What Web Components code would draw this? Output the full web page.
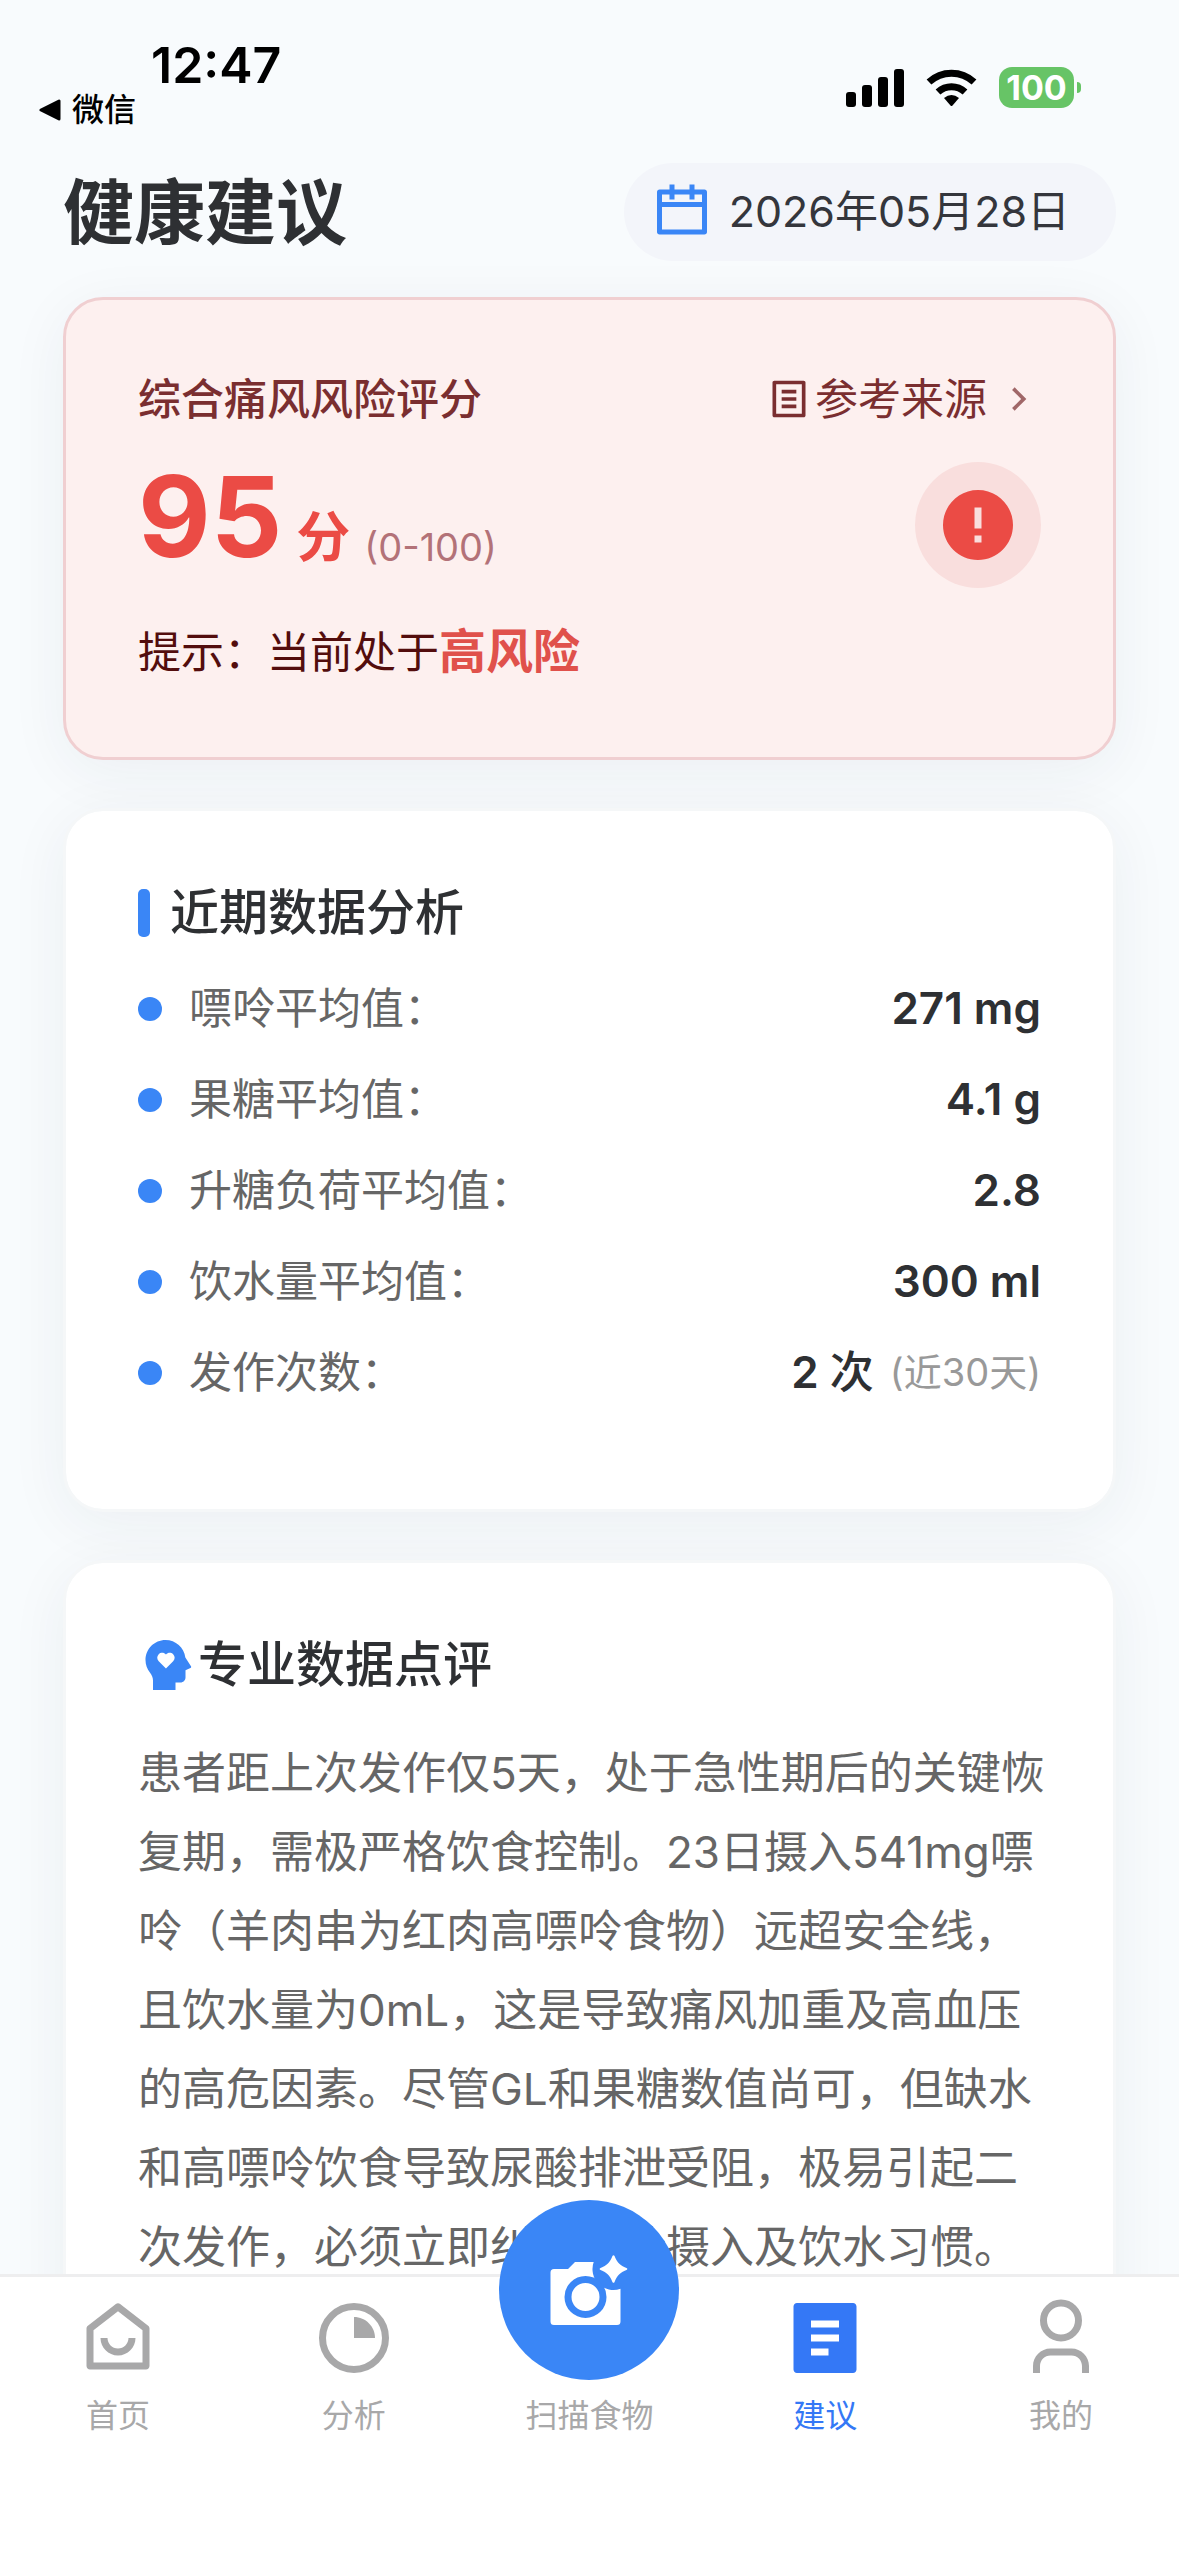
<!DOCTYPE html>
<html lang="zh-CN">
<head>
<meta charset="UTF-8">
<meta name="viewport" content="width=device-width, initial-scale=1">
<title>健康建议</title>
<style>
  body {
    margin: 0;
    background: #f8fbfd;
    color: #2e3033;
    font-family: Inter, "Noto Sans CJK SC", sans-serif;
    font-size: 43px;
  }
</style>
</head>
<body>
<health-app>
  <status-bar slot="top" time="12:47" back="微信" battery="100"></status-bar>
  <page-header slot="top" heading="健康建议" date="2026年05月28日"></page-header>

  <risk-card score="95" range="(0-100)" level="高风险"></risk-card>

  <info-card>
    <card-title marker="bar">近期数据分析</card-title>
    <metric-list>
      <metric-row label="嘌呤平均值：">271 mg</metric-row>
      <metric-row label="果糖平均值：">4.1 g</metric-row>
      <metric-row label="升糖负荷平均值：">2.8</metric-row>
      <metric-row label="饮水量平均值：">300 ml</metric-row>
      <metric-row label="发作次数：" note="(近30天)">2 <span>次</span></metric-row>
    </metric-list>
  </info-card>

  <info-card>
    <card-title marker="mind">专业数据点评</card-title>
    <review-text>患者距上次发作仅5天，处于急性期后的关键恢复期，需极严格饮食控制。23日摄入541mg嘌呤（羊肉串为红肉高嘌呤食物）远超安全线，且饮水量为0mL，这是导致痛风加重及高血压的高危因素。尽管GL和果糖数值尚可，但缺水和高嘌呤饮食导致尿酸排泄受阻，极易引起二次发作，必须立即纠正嘌呤摄入及饮水习惯。</review-text>
  </info-card>

  <tab-bar slot="bottom">
    <tab-item icon="home">首页</tab-item>
    <tab-item icon="pie">分析</tab-item>
    <tab-item icon="camera" raised>扫描食物</tab-item>
    <tab-item icon="article" active>建议</tab-item>
    <tab-item icon="user">我的</tab-item>
  </tab-bar>
</health-app>

<script>
  // shared helper: fills the open shadow root of an element from markup
  function render(el, html) {
    const template = document.createElement("template");
    template.innerHTML = html;
    el.attachShadow({ mode: "open" }).appendChild(template.content.cloneNode(true));
  }

  const ICONS = {
    calendar: `<path d="M9 1V3H15V1H17V3H21C21.55 3 22 3.45 22 4V20C22 20.55 21.55 21 21 21H3C2.45 21 2 20.55 2 20V4C2 3.45 2.45 3 3 3H7V1H9ZM20 10H4V19H20V10ZM15 5H9V7H7V5H4V8H20V5H17V7H15V5Z"/>`,
    source: `<path d="M20 22H4C3.45 22 3 21.55 3 21V3C3 2.45 3.45 2 4 2H20C20.55 2 21 2.45 21 3V21C21 21.55 20.55 22 20 22ZM19 20V4H5V20H19ZM8 7H16V9H8V7ZM8 11H16V13H8V11ZM8 15H16V17H8V15Z"/>`,
    chevron: `<path d="M13.17 12L8.22 7.05L9.64 5.64L16 12L9.64 18.36L8.22 16.95Z"/>`,
    warning: `<path d="M12 22C6.48 22 2 17.52 2 12C2 6.48 6.48 2 12 2C17.52 2 22 6.48 22 12C22 17.52 17.52 22 12 22ZM11 15V17H13V15H11ZM11 7V13H13V7H11Z"/>`,
    mind: `<path fill-rule="evenodd" d="M11 2C15.07 2 18.41 5.04 18.94 8.96L21.19 12.5C21.34 12.73 21.31 13.09 20.97 13.23L19 14.07V17C19 18.1 18.1 19 17 19H15V22H6V18.31C6 17.13 5.56 16 4.76 15C3.66 13.63 3 11.9 3 10C3 5.58 6.58 2 11 2ZM11.18 7.82C10.39 6.96 9.09 6.92 8.29 7.73C7.5 8.54 7.5 9.72 8.29 10.52L11.18 13.4L14.06 10.52C14.86 9.72 14.86 8.54 14.06 7.73C13.26 6.92 11.96 6.96 11.18 7.82Z"/>`,
    home: `<path d="M19 19V9.8L12 4.35L5 9.8V19H19ZM21 20C21 20.55 20.55 21 20 21H4C3.45 21 3 20.55 3 20V9.31C3 9 3.14 8.71 3.39 8.52L11.39 2.3C11.75 2.02 12.25 2.02 12.61 2.3L20.61 8.52C20.86 8.71 21 9 21 9.31V20ZM7 12H9C9 13.66 10.34 15 12 15C13.66 15 15 13.66 15 12H17C17 14.76 14.76 17 12 17C9.24 17 7 14.76 7 12Z"/>`,
    pie: `<circle cx="12" cy="12" r="9" fill="none" stroke="currentColor" stroke-width="2"/><path d="M12 6C15.31 6 18 8.69 18 12H12V6Z"/>`,
    article: `<path d="M20 22H4C3.45 22 3 21.55 3 21V3C3 2.45 3.45 2 4 2H20C20.55 2 21 2.45 21 3V21C21 21.55 20.55 22 20 22ZM8 7V9H16V7H8ZM8 11V13H16V11H8ZM8 15V17H13V15H8Z"/>`,
    user: `<circle cx="12" cy="7" r="5" fill="none" stroke="currentColor" stroke-width="2"/><path d="M20 22H18V20C18 18.34 16.66 17 15 17H9C7.34 17 6 18.34 6 20V22H4V20C4 17.24 6.24 15 9 15H15C17.76 15 20 17.24 20 20V22Z"/>`,
    camera: `<path d="M3 5H7L9 3H14.34A6 6 0 0 0 22 10.66V20A1 1 0 0 1 21 21H3A1 1 0 0 1 2 20V6A1 1 0 0 1 3 5Z"/><circle cx="12" cy="13" r="5" fill="none" stroke="#3a86f6" stroke-width="2"/><path d="M20.3 1.3C21 3.1 21.9 4 23.7 4.7C24.05 4.85 24.05 5.15 23.7 5.3C21.9 6 21 6.9 20.3 8.7C20.15 9.05 19.85 9.05 19.7 8.7C19 6.9 18.1 6 16.3 5.3C15.95 5.15 15.95 4.85 16.3 4.7C18.1 4 19 3.1 19.7 1.3C19.85.95 20.15.95 20.3 1.3Z"/>`
  };

  // artwork that is not centred on the 24 unit grid
  const VIEW_BOXES = { camera: "1 -1 24 24" };

  class AppIcon extends HTMLElement {
    connectedCallback() {
      const name = this.getAttribute("name");
      render(this, `
        <style>
          :host { display: block; flex: none; width: var(--icon-size, 84px); height: var(--icon-size, 84px); }
          svg { display: block; width: 100%; height: 100%; fill: currentColor; }
        </style>
        <svg viewBox="${VIEW_BOXES[name] || "0 0 24 24"}" aria-hidden="true">${ICONS[name]}</svg>
      `);
    }
  }

  class HealthApp extends HTMLElement {
    connectedCallback() {
      render(this, `
        <style>
          :host { display: flex; flex-direction: column; height: 100vh; }
          main {
            flex: 1;
            min-height: 0;
            overflow-y: auto;
            scrollbar-width: none;
          }
          .cards {
            display: flex;
            flex-direction: column;
            gap: 48px;
            padding: 36px 63px 120px;
          }
        </style>
        <main>
          <slot name="top"></slot>
          <div class="cards"><slot></slot></div>
        </main>
        <slot name="bottom"></slot>
      `);
    }
  }

  class StatusBar extends HTMLElement {
    connectedCallback() {
      render(this, `
        <style>
          :host {
            display: flex;
            justify-content: space-between;
            box-sizing: border-box;
            height: 163px;
            padding: 40px 98px 0 39px;
            color: #000;
          }
          .time {
            padding-left: 112px;
            font-size: 50px;
            font-weight: 600;
            line-height: 50px;
          }
          button {
            display: flex;
            align-items: center;
            gap: 11px;
            padding: 0;
            border: 0;
            background: none;
            color: inherit;
            font: 500 32px/40px Inter, "Noto Sans CJK SC", sans-serif;
          }
          .signals {
            display: flex;
            align-items: center;
            gap: 22px;
            height: 95px;
          }
          svg { display: block; }
          .battery { display: flex; align-items: center; gap: 3px; }
          .level {
            width: 75px;
            border-radius: 13px;
            background: #67c466;
            color: #fff;
            font-size: 34px;
            font-weight: 700;
            line-height: 41px;
            text-align: center;
          }
          .nub { width: 4px; height: 11px; border-radius: 0 4px 4px 0; background: #67c466; }
        </style>
        <div>
          <div class="time">${this.getAttribute("time")}</div>
          <button type="button">
            <svg width="22" height="22" viewBox="0 0 22 22"><path d="M2 11L20 2V20Z" stroke="#000" stroke-width="3" stroke-linejoin="round"/></svg>
            ${this.getAttribute("back")}
          </button>
        </div>
        <div class="signals">
          <svg width="58" height="38" viewBox="0 0 58 38">
            <rect x="0" y="23" width="10" height="15" rx="3"/>
            <rect x="16" y="16" width="10" height="22" rx="3"/>
            <rect x="32" y="8" width="10" height="30" rx="3"/>
            <rect x="48" y="0" width="10" height="38" rx="3"/>
          </svg>
          <svg width="51" height="38" viewBox="0 0 51 38">
            <path d="M3 13A33 33 0 0 1 48 13" fill="none" stroke="#000" stroke-width="7"/>
            <path d="M12 23A20 20 0 0 1 39 23" fill="none" stroke="#000" stroke-width="7"/>
            <path d="M18 29Q25.500 23 33 29L26.500 36.500Q25.500 37.500 24.500 36.500Z"/>
          </svg>
          <div class="battery">
            <div class="level">${this.getAttribute("battery")}</div>
            <div class="nub"></div>
          </div>
        </div>
      `);
    }
  }

  class PageHeader extends HTMLElement {
    connectedCallback() {
      render(this, `
        <style>
          :host {
            display: flex;
            align-items: center;
            justify-content: space-between;
            padding: 0 63px;
          }
          h1 { margin: 0; font-size: 71px; font-weight: 700; line-height: 98px; }
          button {
            --icon-size: 60px;
            display: flex;
            align-items: center;
            gap: 17px;
            height: 98px;
            padding: 0 46px 0 28px;
            border: 0;
            border-radius: 49px;
            background: #f3f5fa;
            color: #34363c;
            font: 43px Inter, "Noto Sans CJK SC", sans-serif;
          }
          app-icon { color: #3a86f6; }
          .date { padding-bottom: 8px; }
        </style>
        <h1>${this.getAttribute("heading")}</h1>
        <button type="button">
          <app-icon name="calendar"></app-icon>
          <span class="date">${this.getAttribute("date")}</span>
        </button>
      `);
    }
  }

  class RiskCard extends HTMLElement {
    connectedCallback() {
      render(this, `
        <style>
          :host {
            display: flex;
            flex-direction: column;
            gap: 30px;
            padding: 66px 72px 72px;
            border: 3px solid #f0cfd1;
            border-radius: 40px;
            background: #fdf0ef;
            box-shadow: 0 12px 60px rgba(40, 50, 60, 0.06);
            color: #530d0d;
            line-height: 66px;
          }
          .head, .body, a { display: flex; align-items: center; }
          .head, .body { justify-content: space-between; }
          h2 { margin: 0; font-size: 43px; font-weight: 500; color: #7a2e30; }
          a { --icon-size: 44px; gap: 4px; color: #7a2e30; text-decoration: none; }
          .chevron { margin-left: 6px; opacity: 0.7; }
          .score {
            display: flex;
            align-items: baseline;
            gap: 14px;
            padding-bottom: 18px;
            color: #eb4b45;
            font-weight: 700;
          }
          .number { font-size: 112px; line-height: 100px; }
          .unit { font-size: 54px; line-height: 54px; }
          .range {
            align-self: flex-end;
            color: #b37278;
            font-size: 38px;
            font-weight: 400;
            line-height: 38px;
          }
          .badge {
            display: grid;
            place-items: center;
            width: 126px;
            height: 126px;
            border-radius: 50%;
            background: #f9dedd;
            color: #eb4b45;
          }
          p { margin: 0; }
          strong { color: #e0514b; font-size: 47px; font-weight: 700; }
        </style>
        <div class="head">
          <h2>综合痛风风险评分</h2>
          <a href="#source">
            <app-icon name="source"></app-icon>
            <span>参考来源</span>
            <app-icon class="chevron" name="chevron"></app-icon>
          </a>
        </div>
        <div class="body">
          <div class="score">
            <span class="number">${this.getAttribute("score")}</span>
            <span class="unit">分</span>
            <span class="range">${this.getAttribute("range")}</span>
          </div>
          <div class="badge"><app-icon name="warning"></app-icon></div>
        </div>
        <p>提示：当前处于<strong>${this.getAttribute("level")}</strong></p>
      `);
    }
  }

  class InfoCard extends HTMLElement {
    connectedCallback() {
      render(this, `
        <style>
          :host {
            display: block;
            padding: 66px 72px 72px;
            border: 3px solid #f5f7f8;
            border-radius: 40px;
            background: #fff;
            background-clip: padding-box;
            box-shadow: 0 12px 60px rgba(40, 50, 60, 0.06);
          }
        </style>
        <slot></slot>
      `);
    }
  }

  class CardTitle extends HTMLElement {
    connectedCallback() {
      const marker = this.getAttribute("marker") === "bar"
        ? `<span class="bar"></span>`
        : `<app-icon name="${this.getAttribute("marker")}"></app-icon>`;

      render(this, `
        <style>
          :host { --icon-size: 60px; display: flex; align-items: center; }
          .bar {
            width: 12px;
            height: 48px;
            margin-right: 20px;
            border-radius: 5px;
            background: #3a86f6;
          }
          app-icon { color: #3a86f6; }
          h2 { margin: 0; font-size: 49px; font-weight: 500; line-height: 72px; }
        </style>
        ${marker}
        <h2><slot></slot></h2>
      `);
    }
  }

  class MetricList extends HTMLElement {
    connectedCallback() {
      this.setAttribute("role", "list");
      render(this, `
        <style>
          :host { display: block; padding: 14px 0 19px; }
        </style>
        <slot></slot>
      `);
    }
  }

  class MetricRow extends HTMLElement {
    connectedCallback() {
      const note = this.getAttribute("note");
      this.setAttribute("role", "listitem");
      render(this, `
        <style>
          :host { display: flex; align-items: center; line-height: 91px; }
          .dot {
            width: 24px;
            height: 24px;
            margin-right: 27px;
            border-radius: 50%;
            background: #3a86f6;
          }
          .label { flex: 1; color: #666; }
          .value { font-size: 44px; font-weight: 600; }
          .note { margin-left: 16px; color: #999; font-size: 38px; }
          ::slotted(span) { font-weight: 500; }
        </style>
        <span class="dot"></span>
        <span class="label">${this.getAttribute("label")}</span>
        <span class="value"><slot></slot></span>
        ${note ? `<span class="note">${note}</span>` : ""}
      `);
    }
  }

  class ReviewText extends HTMLElement {
    connectedCallback() {
      render(this, `
        <style>
          :host { display: block; margin-right: -8px; padding-top: 33px; color: #666; }
          p { margin: 0; font-size: 44px; line-height: 79px; }
        </style>
        <p><slot></slot></p>
      `);
    }
  }

  class TabBar extends HTMLElement {
    connectedCallback() {
      render(this, `
        <style>
          :host { display: block; border-top: 3px solid #eeeeef; background: #fff; }
          nav {
            display: grid;
            grid-template-columns: repeat(5, 1fr);
            padding: 19px 0 120px;
          }
        </style>
        <nav><slot></slot></nav>
      `);
    }
  }

  class TabItem extends HTMLElement {
    connectedCallback() {
      render(this, `
        <style>
          :host { display: block; color: #a8a8a9; }
          :host([active]) { color: #3478f6; }
          a {
            display: flex;
            flex-direction: column;
            align-items: center;
            gap: 16px;
            color: inherit;
            font-size: 32px;
            line-height: 40px;
            text-decoration: none;
          }
          /* the scan button rises above the edge of the bar */
          :host([raised]) .icon {
            display: grid;
            place-items: center;
            width: 180px;
            height: 180px;
            margin-top: -96px;
            border-radius: 50%;
            background: #3a86f6;
            color: #fff;
          }
        </style>
        <a href="#${this.getAttribute("icon")}">
          <span class="icon"><app-icon name="${this.getAttribute("icon")}"></app-icon></span>
          <slot></slot>
        </a>
      `);
    }
  }

  customElements.define("app-icon", AppIcon);
  customElements.define("health-app", HealthApp);
  customElements.define("status-bar", StatusBar);
  customElements.define("page-header", PageHeader);
  customElements.define("risk-card", RiskCard);
  customElements.define("info-card", InfoCard);
  customElements.define("card-title", CardTitle);
  customElements.define("metric-list", MetricList);
  customElements.define("metric-row", MetricRow);
  customElements.define("review-text", ReviewText);
  customElements.define("tab-bar", TabBar);
  customElements.define("tab-item", TabItem);
</script>
</body>
</html>
